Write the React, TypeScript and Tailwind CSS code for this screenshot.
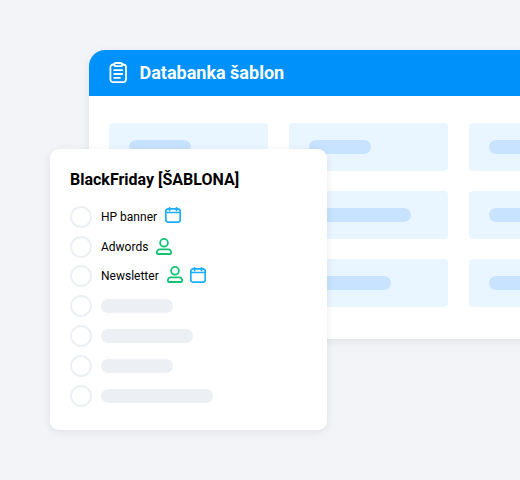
type Task = {
  name?: string;
  width: string;
  icons?: string;
  user?: boolean;
  calendar?: boolean;
};

function ClipboardIcon() {
  return (
    <svg
      className="h-[22px] w-[18px] shrink-0"
      viewBox="0 0 18 22"
      fill="none"
      stroke="white"
      strokeWidth="1.8"
      strokeLinecap="round"
      strokeLinejoin="round"
    >
      <path d="M4.8 2.5H4.2A2.8 2.8 0 0 0 1.4 5.3V17.3A2.8 2.8 0 0 0 4.2 20.1H14.2A2.8 2.8 0 0 0 17 17.3V5.3A2.8 2.8 0 0 0 14.2 2.5H13.6" />
      <rect x="5.2" y="1" width="8" height="3.2" rx="1.6" />
      <path d="M5.2 8.2H13.2M5.2 12H13.2M5.2 15.8H11" />
    </svg>
  );
}

function CalendarIcon() {
  return (
    <svg
      className="h-4 w-4 shrink-0"
      viewBox="0 0 16 16"
      fill="none"
      stroke="#1aaeff"
      strokeWidth="1.7"
      strokeLinecap="round"
      strokeLinejoin="round"
    >
      <rect x="0.8" y="1.8" width="14.4" height="13.4" rx="2.4" />
      <path d="M0.8 5.5H15.2M4.6 0.8V3.4M11.5 0.8V3.4" />
    </svg>
  );
}

function UserIcon() {
  return (
    <svg
      className="h-[17px] w-4 shrink-0"
      viewBox="0 0 16 17"
      fill="none"
      stroke="#14c474"
      strokeWidth="1.8"
      strokeLinejoin="round"
    >
      <circle cx="8" cy="4.8" r="3.9" />
      <path d="M0.9 15V14.2A2.8 2.8 0 0 1 3.7 11.4H12.3A2.8 2.8 0 0 1 15.1 14.2V15A1 1 0 0 1 14.1 16H1.9A1 1 0 0 1 0.9 15Z" />
    </svg>
  );
}

export default function App() {
  const tiles = [
    "w-[62px]",
    "w-[62px]",
    "w-[62px]",
    "w-[82px]",
    "w-[102px]",
    "w-[82px]",
    "w-[62px]",
    "w-[82px]",
    "w-[102px]",
  ];

  const tasks: Task[] = [
    { name: "HP banner", width: "w-14", icons: "mt-0", calendar: true },
    { name: "Adwords", width: "w-[47px]", icons: "mt-0.5", user: true },
    {
      name: "Newsletter",
      width: "w-[58px]",
      icons: "mt-px",
      user: true,
      calendar: true,
    },
    { width: "w-[72px]" },
    { width: "w-[92px]" },
    { width: "w-[72px]" },
    { width: "w-[112px]" },
  ];

  return (
    <main className="relative h-[480px] w-[520px] overflow-hidden bg-[#f3f4f8] pt-[50px] pl-[89px] font-['Roboto',sans-serif]">
      <section className="h-[289px] w-[560px] overflow-hidden rounded-2xl rounded-b-lg bg-white shadow-[0_2px_10px_rgba(0,0,0,0.08)]">
        <header className="flex h-[46px] items-center gap-[12.5px] bg-[#0092fa] pl-5">
          <ClipboardIcon />
          <h1 className="text-[18px] leading-6 font-bold text-white">
            Databanka šablon
          </h1>
        </header>
        <div className="grid grid-cols-[repeat(3,159px)] gap-x-[21px] gap-y-5 pt-[27px] pl-5">
          {tiles.map((width, index) => (
            <div
              className="flex h-12 items-center rounded bg-[#eaf6ff] pl-5"
              key={`tile-${index}`}
            >
              <div className={`h-3.5 rounded-full bg-[#c7e3ff] ${width}`}></div>
            </div>
          ))}
        </div>
      </section>

      <section className="absolute top-[149px] left-[50px] h-[281px] w-[277px] rounded-[9px] bg-white px-5 pt-[19px] shadow-[0_2px_10px_rgba(0,0,0,0.08)]">
        <h2 className="text-[16px] leading-6 font-bold text-black">
          BlackFriday [ŠABLONA]
        </h2>
        <ul className="mt-3.5 flex flex-col gap-2 [&>li:nth-child(3)]:-mt-px">
          {tasks.map((task, index) => (
            <li className="flex h-[22px] items-center" key={`task-${index}`}>
              <span className="mr-[9px] h-[22px] w-[22px] shrink-0 rounded-full border-2 border-[#ecf0f5]"></span>
              {task.name ? (
                <>
                  <span
                    className={`mr-2 text-[12px] leading-4 whitespace-nowrap text-black ${task.width}`}
                  >
                    {task.name}
                  </span>
                  <span
                    className={`flex h-[17px] items-end gap-[7px] self-start ${task.icons}`}
                  >
                    {task.user && <UserIcon />}
                    {task.calendar && <CalendarIcon />}
                  </span>
                </>
              ) : (
                <span
                  className={`h-3.5 rounded-full bg-[#ecf0f5] ${task.width}`}
                ></span>
              )}
            </li>
          ))}
        </ul>
      </section>
    </main>
  );
}
